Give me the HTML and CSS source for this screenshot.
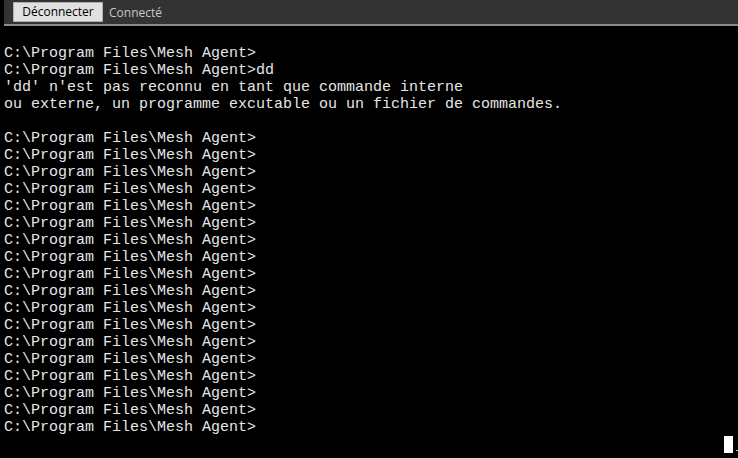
FILE: index.html
```html
<!DOCTYPE html>
<html>
<head>
<meta charset="utf-8">
<link rel="stylesheet" href="styles.css">
</head>
<body>
<div class="app">
  <div class="toolbar">
    <button class="btn">Déconnecter</button>
    <span class="status">Connecté</span>
  </div>
  <pre class="term">C:\Program Files\Mesh Agent&gt;
C:\Program Files\Mesh Agent&gt;dd
'dd' n'est pas reconnu en tant que commande interne
ou externe, un programme excutable ou un fichier de commandes.

C:\Program Files\Mesh Agent&gt;
C:\Program Files\Mesh Agent&gt;
C:\Program Files\Mesh Agent&gt;
C:\Program Files\Mesh Agent&gt;
C:\Program Files\Mesh Agent&gt;
C:\Program Files\Mesh Agent&gt;
C:\Program Files\Mesh Agent&gt;
C:\Program Files\Mesh Agent&gt;
C:\Program Files\Mesh Agent&gt;
C:\Program Files\Mesh Agent&gt;
C:\Program Files\Mesh Agent&gt;
C:\Program Files\Mesh Agent&gt;
C:\Program Files\Mesh Agent&gt;
C:\Program Files\Mesh Agent&gt;
C:\Program Files\Mesh Agent&gt;
C:\Program Files\Mesh Agent&gt;
C:\Program Files\Mesh Agent&gt;
C:\Program Files\Mesh Agent&gt;
                                                                                <span class="cursor"> </span><span class="tick"></span></pre>
</div>
</body>
</html>
```
FILE: styles.css
```css
html, body {
  margin: 0;
  padding: 0;
  background: #000;
  overflow: hidden;
}
.app {
  width: 738px;
  height: 458px;
  background: #000;
  display: flex;
  flex-direction: column;
}
.toolbar {
  margin-left: 4px;
  height: 24px;
  background: #333333;
  border-bottom: 2px solid #8a8a8a;
  display: flex;
  align-items: center;
  padding-left: 9px;
  gap: 6px;
  box-sizing: content-box;
}
.btn {
  font-family: "Open Sans", "Noto Sans", sans-serif;
  font-size: 12px;
  height: 20px;
  width: 90px;
  padding: 0;
  margin: 0;
  background: #e1e1e1;
  border: 1px solid #adadad;
  color: #000;
  line-height: 18px;
}
.status {
  font-family: "Open Sans", "Noto Sans", sans-serif;
  font-size: 12px;
  color: #c8c8c8;
}
.term {
  margin: 0;
  padding: 19px 0 0 4px;
  font-family: "Liberation Mono", "Courier New", monospace;
  font-size: 15px;
  line-height: 17px;
  color: #e6e6e6;
  white-space: pre;
}
.cursor {
  display: inline-block;
  width: 9px;
  height: 17px;
  background: #fff;
  vertical-align: top;
}
.tick {
  display: inline-block;
  width: 3px;
  height: 1px;
  background: #ccc;
  vertical-align: top;
  margin-top: 14px;
  margin-left: 3px;
}
```
